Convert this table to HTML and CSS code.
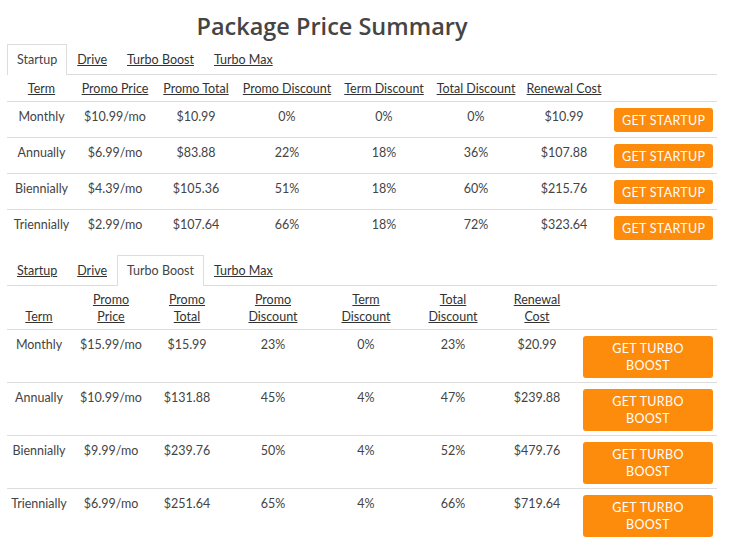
FILE: index.html
```html
<!DOCTYPE html>
<html>
<head>
<meta charset="utf-8">
<link rel="stylesheet" href="styles.css">
</head>
<body>
<div class="page">
  <h1 class="title">Package Price Summary</h1>

  <section class="pkg">
    <div class="tabs">
      <span class="tab active">Startup</span>
      <a class="tab" href="#">Drive</a>
      <a class="tab" href="#">Turbo Boost</a>
      <a class="tab" href="#">Turbo Max</a>
    </div>
    <table class="prices one">
      <colgroup>
        <col class="c1"><col class="c2"><col class="c3"><col class="c4"><col class="c5"><col class="c6"><col class="c7"><col class="c8">
      </colgroup>
      <thead>
        <tr><th><u>Term</u></th><th><u>Promo Price</u></th><th><u>Promo Total</u></th><th><u>Promo Discount</u></th><th><u>Term Discount</u></th><th><u>Total Discount</u></th><th><u>Renewal Cost</u></th><th></th></tr>
      </thead>
      <tbody>
        <tr><td>Monthly</td><td>$10.99/mo</td><td>$10.99</td><td>0%</td><td>0%</td><td>0%</td><td>$10.99</td><td class="act"><a class="btn" href="#">GET STARTUP</a></td></tr>
        <tr><td>Annually</td><td>$6.99/mo</td><td>$83.88</td><td>22%</td><td>18%</td><td>36%</td><td>$107.88</td><td class="act"><a class="btn" href="#">GET STARTUP</a></td></tr>
        <tr><td>Biennially</td><td>$4.39/mo</td><td>$105.36</td><td>51%</td><td>18%</td><td>60%</td><td>$215.76</td><td class="act"><a class="btn" href="#">GET STARTUP</a></td></tr>
        <tr><td>Triennially</td><td>$2.99/mo</td><td>$107.64</td><td>66%</td><td>18%</td><td>72%</td><td>$323.64</td><td class="act"><a class="btn" href="#">GET STARTUP</a></td></tr>
      </tbody>
    </table>
  </section>

  <section class="pkg second">
    <div class="tabs">
      <a class="tab" href="#">Startup</a>
      <a class="tab" href="#">Drive</a>
      <span class="tab active">Turbo Boost</span>
      <a class="tab" href="#">Turbo Max</a>
    </div>
    <table class="prices two">
      <colgroup>
        <col class="c1"><col class="c2"><col class="c3"><col class="c4"><col class="c5"><col class="c6"><col class="c7"><col class="c8">
      </colgroup>
      <thead>
        <tr><th><u>Term</u></th><th><u>Promo</u><br><u>Price</u></th><th><u>Promo</u><br><u>Total</u></th><th><u>Promo</u><br><u>Discount</u></th><th><u>Term</u><br><u>Discount</u></th><th><u>Total</u><br><u>Discount</u></th><th><u>Renewal</u><br><u>Cost</u></th><th></th></tr>
      </thead>
      <tbody>
        <tr><td>Monthly</td><td>$15.99/mo</td><td>$15.99</td><td>23%</td><td>0%</td><td>23%</td><td>$20.99</td><td class="act"><a class="btn wide" href="#">GET TURBO<br>BOOST</a></td></tr>
        <tr><td>Annually</td><td>$10.99/mo</td><td>$131.88</td><td>45%</td><td>4%</td><td>47%</td><td>$239.88</td><td class="act"><a class="btn wide" href="#">GET TURBO<br>BOOST</a></td></tr>
        <tr><td>Biennially</td><td>$9.99/mo</td><td>$239.76</td><td>50%</td><td>4%</td><td>52%</td><td>$479.76</td><td class="act"><a class="btn wide" href="#">GET TURBO<br>BOOST</a></td></tr>
        <tr><td>Triennially</td><td>$6.99/mo</td><td>$251.64</td><td>65%</td><td>4%</td><td>66%</td><td>$719.64</td><td class="act"><a class="btn wide" href="#">GET TURBO<br>BOOST</a></td></tr>
      </tbody>
    </table>
  </section>
</div>
</body>
</html>
```

FILE: styles.css
```css
html, body {
  margin: 0;
  padding: 0;
  background: #fff;
}
body {
  font-family: "Lato", "Open Sans", sans-serif;
  font-size: 12.5px;
  color: #444;
}
.page {
  width: 710px;
  margin-left: 7px;
}
.title {
  font-family: "Open Sans", "Lato", sans-serif;
  font-weight: 600;
  font-size: 23.5px;
  line-height: 32px;
  color: #454545;
  text-align: center;
  margin: 10px 0 2px;
  padding-right: 60px;
}
.tabs {
  display: flex;
  border-bottom: 1px solid #ddd;
}
.tab {
  display: block;
  padding: 0 9px;
  line-height: 29px;
  border: 1px solid transparent;
  border-bottom: none;
  color: #333;
  text-decoration: underline;
  font-size: 12.5px;
}
.tab.active {
  border-color: #ddd;
  background: #fff;
  text-decoration: none;
  color: #444;
  margin-bottom: -1px;
  padding-bottom: 1px;
}
.second {
  margin-top: 10px;
}
.prices {
  width: 710px;
  border-collapse: collapse;
  table-layout: fixed;
}
.prices th {
  font-weight: normal;
  color: #333;
  line-height: 17px;
  padding: 5px 2px 4px;
  vertical-align: bottom;
  text-align: center;
  border-bottom: 1px solid #ddd;
  white-space: nowrap;
}
.prices td {
  line-height: 17px;
  text-align: center;
  vertical-align: top;
  color: #444;
  padding: 6px 2px 5px;
  border-bottom: 1px solid #ddd;
  white-space: nowrap;
}
.prices tbody tr:last-child td {
  border-bottom: none;
}
.prices td.act {
  text-align: left;
  padding-left: 6px;
}
.two td {
  padding-bottom: 4px;
}
.two th {
  padding-top: 5px;
  padding-bottom: 4px;
}
.one .c1 { width: 69px; }
.one .c2 { width: 78px; }
.one .c3 { width: 84px; }
.one .c4 { width: 98px; }
.one .c5 { width: 96px; }
.one .c6 { width: 88px; }
.one .c7 { width: 88px; }
.one .c8 { width: 109px; }
.two .c1 { width: 64px; }
.two .c2 { width: 80px; }
.two .c3 { width: 72px; }
.two .c4 { width: 100px; }
.two .c5 { width: 86px; }
.two .c6 { width: 88px; }
.two .c7 { width: 80px; }
.two .c8 { width: 140px; }
.btn {
  display: inline-block;
  background: #fd8b0c;
  color: #fff;
  text-decoration: none;
  font-family: "Lato", sans-serif;
  font-size: 12.5px;
  letter-spacing: 0.3px;
  line-height: 17px;
  padding: 3.5px 8px;
  border-radius: 3px;
  text-align: center;
}
.btn.wide {
  width: 130px;
  box-sizing: border-box;
  padding: 4px 8px;
}
```
